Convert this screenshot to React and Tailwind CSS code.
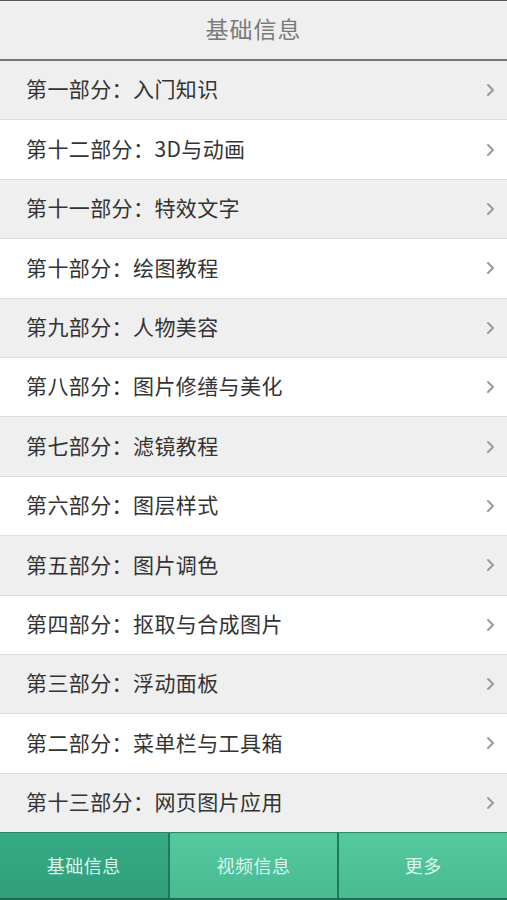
const items = [
  '第一部分：入门知识',
  '第十二部分：3D与动画',
  '第十一部分：特效文字',
  '第十部分：绘图教程',
  '第九部分：人物美容',
  '第八部分：图片修缮与美化',
  '第七部分：滤镜教程',
  '第六部分：图层样式',
  '第五部分：图片调色',
  '第四部分：抠取与合成图片',
  '第三部分：浮动面板',
  '第二部分：菜单栏与工具箱',
  '第十三部分：网页图片应用',
]

const tabs = ['基础信息', '视频信息', '更多']

function Chevron() {
  return (
    <svg width="9" height="14" viewBox="0 0 9 14" className="shrink-0">
      <path d="M2 2 L7 7 L2 12" fill="none" stroke="#9a9a9a" strokeWidth="2" strokeLinecap="round" strokeLinejoin="round" />
    </svg>
  )
}

export default function App() {
  return (
    <div
      className="w-[507px] h-[900px] flex flex-col bg-white overflow-hidden"
      style={{ fontFamily: '"Noto Sans CJK SC", "Noto Sans", sans-serif' }}
    >
      <div className="h-[61px] shrink-0 flex items-center justify-center pb-[3px] bg-[#efefef] border-t border-t-[#555] border-b-2 border-b-[#777]">
        <h1 className="text-[23px] tracking-[1px] text-[#7a7a7a]">基础信息</h1>
      </div>

      <ul className="flex-1 flex flex-col">
        {items.map((label, i) => (
          <li
            key={label}
            className={`flex-1 flex items-center justify-between pl-[26px] pr-[12px] border-b border-[#dcdcdc] last:border-b-0 ${
              i % 2 === 0 ? 'bg-[#efefef]' : 'bg-white'
            }`}
          >
            <span className="text-[21px] tracking-[0.4px] text-[#333] pb-[2px]">{label}</span>
            <Chevron />
          </li>
        ))}
      </ul>

      <div className="h-[68px] shrink-0 flex border-t border-t-[#2a8a68] border-b-2 border-b-[#1d6b50]">
        {tabs.map((t, i) => (
          <div
            key={t}
            className={`flex-1 flex items-center justify-center text-[18px] tracking-[0.5px] text-[#dff5ec] ${
              i > 0 ? 'border-l-2 border-l-[#1f7a5a]' : ''
            } ${
              i === 0
                ? 'bg-gradient-to-b from-[#36ab85] to-[#2f9f7a]'
                : 'bg-gradient-to-b from-[#55c8a0] to-[#48bb93]'
            }`}
          >
            {t}
          </div>
        ))}
      </div>
    </div>
  )
}
